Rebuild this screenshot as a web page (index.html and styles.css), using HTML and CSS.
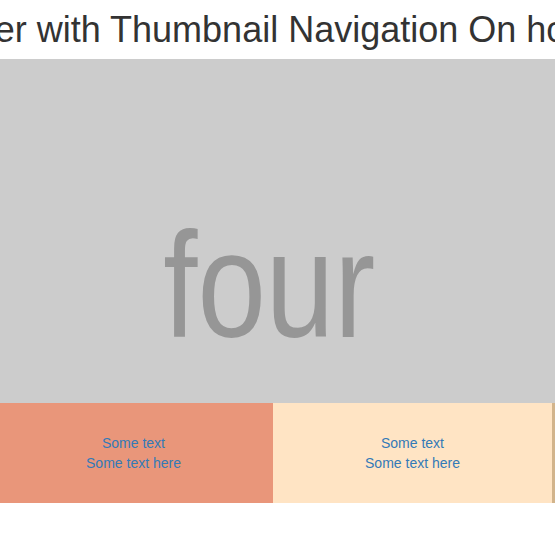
FILE: index.html
```html
<!DOCTYPE html>
<html>
<head>
<meta charset="utf-8">
<link rel="stylesheet" href="styles.css">
</head>
<body>
<div class="page">
  <div class="title-wrap">
    <h1 class="title">Slider with Thumbnail Navigation On hover</h1>
  </div>
  <div class="slider">
    <div class="slide"><span class="slide-text">four</span></div>
  </div>
  <div class="thumbs">
    <div class="thumb thumb-salmon"><a class="thumb-link">Some text<br>Some text here</a></div>
    <div class="thumb thumb-bisque"><a class="thumb-link">Some text<br>Some text here</a></div>
    <div class="thumb thumb-tan"><a class="thumb-link">Some text<br>Some text here</a></div>
  </div>
</div>
</body>
</html>
```

FILE: styles.css
```css
html, body {
  margin: 0;
  padding: 0;
  background: #fff;
  overflow: hidden;
  font-family: "Liberation Sans", Arial, sans-serif;
}

.page {
  width: 555px;
  overflow: hidden;
}

.title-wrap {
  display: flex;
  justify-content: center;
  width: 555px;
}

.title {
  flex-shrink: 0;
  white-space: nowrap;
  margin: 10px 0 10px;
  font-size: 36px;
  line-height: 39px;
  font-weight: 400;
  color: #333;
  position: relative;
  left: -2px;
}

.slider {
  background: #ccc;
  height: 344px;
  box-sizing: border-box;
  padding-top: 151px;
  padding-right: 17px;
  text-align: center;
}

.slide {
  font-family: "Liberation Sans", Arial, sans-serif;
  font-size: 150px;
  line-height: 150px;
  color: #969696;
}

.slide-text {
  display: inline-block;
  transform: scaleX(0.82);
  transform-origin: center;
}

.thumbs {
  display: flex;
  margin-left: -6px;
}

.thumb {
  flex: 0 0 279px;
  height: 100px;
  box-sizing: border-box;
  padding-top: 30px;
  text-align: center;
  font-size: 14px;
  line-height: 20px;
}

.thumb-link {
  color: #337ab7;
}

.thumb-salmon { background: #e9967a; }
.thumb-bisque { background: #ffe4c4; }
.thumb-tan { background: #d2b48c; }
```
